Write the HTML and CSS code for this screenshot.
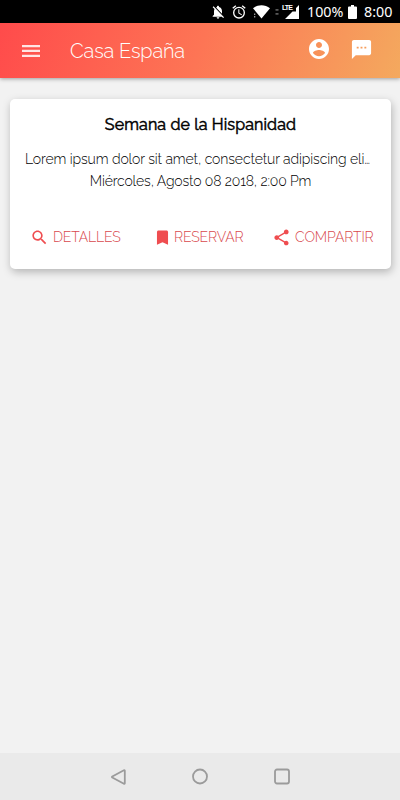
FILE: index.html
```html
<!DOCTYPE html>
<html lang="es">
<head>
<meta charset="utf-8">
<meta name="viewport" content="width=device-width">
<title>Casa España</title>
<link rel="stylesheet" href="styles.css">
</head>
<body>
<div class="status">
  <svg class="st-bell" viewBox="0 0 24 24"><path d="M20 18.69L7.84 6.14 5.27 3.49 4 4.76l2.8 2.8v.01c-.52.99-.8 2.16-.8 3.42v5l-2 2v1h13.73l2 2L21 19.72l-1-1.03zM12 22c1.11 0 2-.89 2-2h-4c0 1.11.89 2 2 2zm6-7.32V11c0-3.08-1.64-5.64-4.5-6.32V4c0-.83-.67-1.5-1.5-1.5s-1.5.67-1.5 1.5v.68c-.15.03-.29.08-.42.12-.1.03-.2.07-.3.11h-.01c-.01 0-.01 0-.02.01-.23.09-.46.2-.68.31L18 14.68z"/></svg>
  <svg class="st-alarm" viewBox="0 0 24 24"><path d="M22 5.72l-4.6-3.86-1.29 1.53 4.6 3.86L22 5.72zM7.88 3.39L6.6 1.86 2 5.71l1.29 1.53 4.59-3.85zM12.5 8H11v6l4.75 2.85.75-1.23-4-2.37V8zM12 4a9 9 0 1 0 0 18 9 9 0 0 0 0-18zm0 16a7 7 0 1 1 0-14 7 7 0 0 1 0 14z"/></svg>
  <svg class="st-wifi" viewBox="0 0 17 14"><path d="M0 3.2C5-.7 12-.7 17 3.2L8.5 13.5z"/><path d="M1 8.5h1.3V10H1zM1 11h1.3v1.5H1z" opacity=".6"/></svg>
  <svg class="st-dots" viewBox="0 0 4 8"><path d="M.5 1h3v1.800h-3zM.5 5h3v1.800h-3z"/></svg>
  <span class="lte">LTE</span>
  <svg class="st-signal" viewBox="0 0 14 14"><path d="M14 0v14H0L7.500 6.500H11V3z"/></svg>
  <span class="pct">100%</span>
  <svg class="st-batt" viewBox="0 0 9 14"><path d="M3 0h3v1.5h2q1 0 1 1V13q0 1-1 1H1q-1 0-1-1V2.5q0-1 1-1h2z"/></svg>
  <span class="clock">8:00</span>
</div>
<header class="bar">
  <svg class="menu" viewBox="0 0 24 24"><path d="M3 18h18v-2.300H3V18zm0-4.900h18v-2.300H3v2.300zM3 6v2.300h18V6H3z"/></svg>
  <h1 class="app-title">Casa España</h1>
  <svg class="account" viewBox="0 0 24 24"><path d="M12 2C6.48 2 2 6.48 2 12s4.48 10 10 10 10-4.48 10-10S17.52 2 12 2zm0 3c1.66 0 3 1.34 3 3s-1.34 3-3 3-3-1.34-3-3 1.34-3 3-3zm0 14.2c-2.5 0-4.71-1.28-6-3.22.03-1.99 4-3.08 6-3.08 1.99 0 5.97 1.09 6 3.08-1.29 1.94-3.5 3.22-6 3.22z"/></svg>
  <svg class="chat" viewBox="0 0 24 24"><path d="M20 2H4c-1.1 0-1.99.9-1.99 2L2 22l4-4h14c1.1 0 2-.9 2-2V4c0-1.100-.9-2-2-2zM9 11H7V9h2v2zm4 0h-2V9h2v2zm4 0h-2V9h2v2z"/></svg>
</header>
<main class="content">
  <article class="card">
    <h2 class="event">Semana de la Hispanidad</h2>
    <p class="desc">Lorem ipsum dolor sit amet, consectetur adipiscing eli…</p>
    <p class="date">Miércoles, Agosto 08 2018, 2:00 Pm</p>
    <div class="actions">
      <a class="action details"><svg viewBox="0 0 24 24"><path d="M15.500 14h-.79l-.28-.27C15.410 12.590 16 11.110 16 9.500 16 5.910 13.090 3 9.500 3S3 5.910 3 9.500 5.910 16 9.500 16c1.610 0 3.090-.59 4.230-1.570l.27.28v.79l5 4.990L20.490 19l-4.990-5zm-6 0C7.010 14 5 11.990 5 9.500S7.010 5 9.500 5 14 7.010 14 9.500 11.990 14 9.500 14z"/></svg><span>DETALLES</span></a>
      <a class="action reserve"><svg viewBox="0 0 24 24"><path d="M17 3H7c-1.100 0-1.990.9-1.990 2L5 21l7-3 7 3V5c0-1.100-.9-2-2-2z"/></svg><span>RESERVAR</span></a>
      <a class="action share"><svg viewBox="0 0 24 24"><path d="M18 16.080c-.76 0-1.440.3-1.960.77L8.910 12.700c.05-.23.09-.46.09-.7s-.04-.47-.09-.7l7.050-4.110c.54.5 1.250.81 2.040.81 1.660 0 3-1.340 3-3s-1.340-3-3-3-3 1.340-3 3c0 .24.04.47.09.7L8.040 9.810C7.500 9.310 6.790 9 6 9c-1.660 0-3 1.340-3 3s1.340 3 3 3c.79 0 1.500-.31 2.040-.81l7.120 4.160c-.05.21-.08.43-.08.65 0 1.610 1.310 2.920 2.920 2.920s2.920-1.310 2.920-2.920-1.310-2.920-2.920-2.920z"/></svg><span>COMPARTIR</span></a>
    </div>
  </article>
</main>
<nav class="nav">
  <svg viewBox="0 0 18 18"><path d="M15.800 2.800v12.400q0 1-.9.500L3.300 9.500q-.8-.5 0-1l11.600-6.200q.9-.5.9.5z"/></svg>
  <svg viewBox="0 0 18 18"><circle cx="9" cy="8.500" r="7"/></svg>
  <svg viewBox="0 0 18 18"><rect x="2" y="1.500" width="14" height="14" rx="2"/></svg>
</nav>
</body>
</html>
```
FILE: styles.css
```css
* { box-sizing: border-box; }
body {
  margin: 0;
  height: 800px;
  display: flex;
  flex-direction: column;
  background: #f2f2f2;
  font-family: Raleway, Lato, sans-serif;
  font-weight: 300;
  overflow: hidden;
}
svg { display: block; flex: none; fill: currentColor; }
h1, h2, p { margin: 0; font-weight: 300; white-space: nowrap; }

.status {
  height: 23px;
  flex: none;
  display: flex;
  align-items: center;
  background: #000;
  color: #fff;
  font: 400 14.3px/23px "Noto Sans", sans-serif;
  padding-left: 210px;
}
.st-bell { width: 16px; height: 16px; }
.st-alarm { width: 16px; height: 16px; margin-left: 5px; }
.st-wifi { width: 17px; height: 14px; margin-left: 6px; }
.st-dots { width: 4px; height: 8px; margin-left: 5px; opacity: .35; }
.lte { width: 10px; margin: -8px 0 0 3px; font: 700 7px/8px "Liberation Sans", sans-serif; letter-spacing: -.9px; }
.st-signal { width: 14px; height: 14px; margin-left: -7px; }
.pct { width: 36px; margin-left: 8px; }
.st-batt { width: 9px; height: 14px; margin-left: 5px; }
.clock { margin-left: 7px; }

.bar {
  height: 55px;
  flex: none;
  display: flex;
  align-items: center;
  padding-left: 19px;
  color: #fff;
  background: linear-gradient(110deg, #ff4b4b 0%, #fd7555 50%, #f4a95e 100%);
  box-shadow: 0 1px 4px rgba(0, 0, 0, .35);
}
.menu { width: 24px; height: 24px; opacity: .85; }
.app-title { width: 238px; margin-left: 27px; font-size: 20px; letter-spacing: -.2px; line-height: 28px; }
.account { width: 24px; height: 24px; margin: -3px 0 0 -1px; }
.chat { width: 23px; height: 23px; margin: -3px 0 0 19px; }

.content { flex: 1; padding: 21px 9px 0 10px; }
.card {
  height: 170px;
  background: #fff;
  border-radius: 5px;
  padding-top: 15px;
  box-shadow: 1px 3px 8px rgba(0, 0, 0, .26);
  color: #000;
  text-align: center;
}
.event { font-size: 16px; letter-spacing: .13px; line-height: 22px; font-weight: 400; -webkit-text-stroke: .5px #000; }
.desc, .date { font-size: 14px; letter-spacing: -.1px; line-height: 22px; }
.date { letter-spacing: -.15px; }
.desc { margin: 12px 10px 0 15px; text-align: left; }
.actions { display: flex; margin-top: 35px; color: #ef4d50; }
.action { display: flex; align-items: center; height: 20px; font-size: 14px; letter-spacing: -.13px; line-height: 20px; white-space: nowrap; }
.action svg { width: 19px; height: 19px; }
.action span { color: #d8484c; }
.details { width: 123px; margin-left: 20px; }
.details span { margin-left: 4px; }
.reserve { width: 119px; }
.reserve span { margin-left: 2px; }
.share span { margin-left: 4px; }

.nav {
  height: 47px;
  flex: none;
  display: flex;
  justify-content: center;
  align-items: center;
  gap: 64px;
  background: #eaeaea;
  color: #9b9b9b;
}
.nav svg { width: 18px; height: 18px; fill: none; stroke: currentColor; stroke-width: 1.8; }
```
